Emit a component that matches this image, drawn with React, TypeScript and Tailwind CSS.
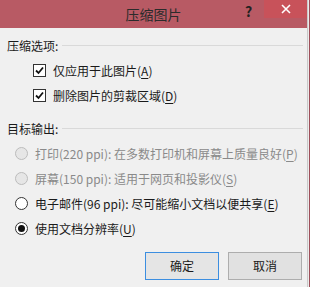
const font = "font-['Noto_Sans_CJK_SC','Microsoft_YaHei',sans-serif]";

function Check() {
  return (
    <span className="flex h-[13px] w-[13px] items-center justify-center border border-[#333333] bg-white">
      <svg width="9" height="9" viewBox="0 0 9 9">
        <path d="M1 4.5 L3.5 7 L8 1.5" fill="none" stroke="#111" strokeWidth="1.8" />
      </svg>
    </span>
  );
}

function Radio({ disabled, checked }: { disabled?: boolean; checked?: boolean }) {
  return (
    <span
      className={
        disabled
          ? "flex h-[13px] w-[13px] items-center justify-center rounded-full border border-[#bcbcbc] bg-[#e6e6e6]"
          : "flex h-[13px] w-[13px] items-center justify-center rounded-full border border-[#333333] bg-white"
      }
    >
      {checked && <span className="h-[7px] w-[7px] rounded-full bg-[#111]" />}
    </span>
  );
}

function Key({ k }: { k: string }) {
  return (
    <>
      (<span className="underline underline-offset-2">{k}</span>)
    </>
  );
}

const radios = [
  { label: "打印(220 ppi): 在多数打印机和屏幕上质量良好", k: "P", disabled: true },
  { label: "屏幕(150 ppi): 适用于网页和投影仪", k: "S", disabled: true },
  { label: "电子邮件(96 ppi): 尽可能缩小文档以便共享", k: "E" },
  { label: "使用文档分辨率", k: "U", checked: true },
];

export default function App() {
  return (
    <div className={`flex h-[287px] w-[311px] overflow-hidden bg-white text-[12px] text-[#1a1a1a] ${font}`}>
      <div className="flex w-[307px] flex-col bg-[#f0f0f0]">
        <div className="relative flex h-[28px] shrink-0 items-center justify-center bg-[#b85a64]">
          <span className="text-[14px] text-[#2b2b2b]">压缩图片</span>
          <span className="absolute left-[245px] top-[1px] text-[14px] font-bold text-[#222]">?</span>
          <span className="absolute right-0 top-0 flex h-[18px] w-[43px] items-center justify-center bg-[#c8525a]">
            <svg width="10" height="10" viewBox="0 0 10 10">
              <path d="M1 1 L9 9 M9 1 L1 9" stroke="#fff" strokeWidth="1.6" />
            </svg>
          </span>
        </div>

        <div className="mt-[5px] flex h-[25px] items-center pl-[7px] pr-[4px]">
          <span>压缩选项:</span>
          <span className="ml-[4px] h-px flex-1 bg-[#d9d9d9]" />
        </div>
        <div className="flex h-[25px] items-center gap-[7px] pl-[33px]">
          <Check />
          <span>仅应用于此图片<Key k="A" /></span>
        </div>
        <div className="flex h-[25px] items-center gap-[7px] pl-[33px]">
          <Check />
          <span>删除图片的剪裁区域<Key k="D" /></span>
        </div>

        <div className="mt-[8px] flex h-[25px] items-center pl-[7px] pr-[4px]">
          <span>目标输出:</span>
          <span className="ml-[4px] h-px flex-1 bg-[#d9d9d9]" />
        </div>
        {radios.map((r) => (
          <div key={r.k} className="flex h-[25px] items-center gap-[7px] pl-[15px]">
            <Radio disabled={r.disabled} checked={r.checked} />
            <span className={r.disabled ? "text-[#8a8a8a]" : ""}>
              {r.label}
              <Key k={r.k} />
            </span>
          </div>
        ))}

        <div className="mt-[11px] flex gap-[9px] pl-[145px]">
          <button className="flex h-[28px] w-[74px] items-center justify-center border border-[#3c8ee0] bg-[#e5e5e5] text-[12px]">
            确定
          </button>
          <button className="flex h-[28px] w-[74px] items-center justify-center border border-[#adadad] bg-[#e1e1e1] text-[12px]">
            取消
          </button>
        </div>
      </div>
      <div className="w-px bg-[#c9c9c9]" />
      <div className="w-px bg-[#ececec]" />
      <div className="w-px bg-[#9e4f5a]" />
      <div className="w-px bg-white" />
    </div>
  );
}
